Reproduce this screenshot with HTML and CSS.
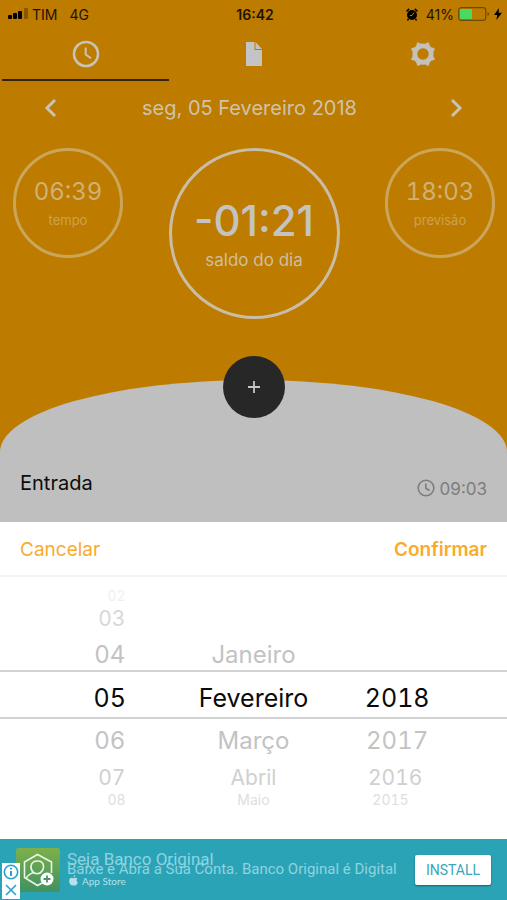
FILE: index.html
```html
<!DOCTYPE html>
<html lang="pt-BR">
<head>
<meta charset="utf-8">
<meta name="viewport" content="width=device-width, initial-scale=1">
<title>Saldo do dia</title>
<link rel="stylesheet" href="styles.css">
</head>
<body>
<div class="app">
  <header class="status">
    <div class="status-left">
      <svg class="signal" width="20" height="12" viewBox="0 0 20 12"><rect x="0" y="7" width="4" height="4" rx="1"/><rect x="5" y="5" width="4" height="6" rx="1"/><rect x="10" y="3" width="4" height="8" rx="1"/><rect x="16" y="0" width="4" height="11" rx="1" opacity=".28"/></svg>
      <span>TIM</span><span class="network">4G</span>
    </div>
    <strong>16:42</strong>
    <div class="status-right">
      <svg width="12" height="13" viewBox="0 0 12 13"><circle cx="6" cy="7" r="5"/><path d="M.6 3.4 3.2.9M11.4 3.4 8.800.9M2.500 11 1.400 12.400M9.500 11l1.100 1.400" stroke="#0d0a04" stroke-width="1.600"/><path d="M8 4.500 6 7.500H3.800" fill="none" stroke="#bd7b00" stroke-width="1"/></svg>
      <span>41%</span>
      <svg width="32" height="14" viewBox="0 0 32 14"><rect x=".7" y=".7" width="27" height="12.600" rx="2.500" fill="none" stroke="#6e4a08" stroke-width="1.200"/><rect x="2" y="2" width="12" height="10" rx="1" fill="#4bd964"/><path d="M29.500 5v4q1.600-.5 1.600-2t-1.600-2" fill="#6e4a08"/></svg>
      <svg width="8" height="12" viewBox="0 0 8 12"><path d="M5 0 0 7h3.200L2.400 12 8 4.800H4.600z"/></svg>
    </div>
  </header>

  <nav class="tabs">
    <button class="tab active" aria-label="Ponto"><svg width="28" height="28" viewBox="0 0 28 28"><circle cx="14" cy="14" r="12" fill="none" stroke="#c8c3b9" stroke-width="2.600"/><path d="M13.700 7.500v7l5.300 3.800" fill="none" stroke="#c8c3b9" stroke-width="2"/></svg></button>
    <button class="tab" aria-label="Relatório"><svg width="18" height="26" viewBox="0 0 18 26"><path d="M1 1h8.500v8H17v16H1z" fill="#c4c4c6"/><path d="M10.500 1 17 8h-6.500z" fill="#c8c3b9"/></svg></button>
    <button class="tab" aria-label="Configurações"><svg width="26" height="26" viewBox="-13 -13 26 26"><path d="M-5.500-11.600-2-10l2-.2 2 .2 3.500-1.600L6.600-8 8-6.600l3.700 1.300L10.100-2l.2 2-.2 2 1.600 3.400L8 6.700 6.700 8l-1.300 3.800L2 10.200l-2 .2-2-.2-3.400 1.600L-6.700 8-8 6.700l-3.700-1.300L-10.100 2l-.2-2 .2-2-1.600-3.400L-8-6.600-6.600-8zM0-6A6 6 0 1 0 0 6 6 6 0 1 0 0-6z" fill="#c4c1bc" stroke="#c4c1bc" stroke-width=".5" fill-rule="evenodd"/></svg></button>
  </nav>

  <div class="datebar">
    <button aria-label="Dia anterior"><svg width="14" height="20" viewBox="0 0 14 20"><path d="M11 2 3 10l8 8"/></svg></button>
    <h1>seg, 05 Fevereiro 2018</h1>
    <button aria-label="Próximo dia"><svg width="14" height="20" viewBox="0 0 14 20"><path d="m3 2 8 8-8 8"/></svg></button>
  </div>

  <section class="gauges">
    <div class="gauge"><b>06:39</b><span>tempo</span></div>
    <div class="gauge main"><b>-01:21</b><span>saldo do dia</span></div>
    <div class="gauge"><b>18:03</b><span>previsão</span></div>
  </section>

  <main class="hill">
    <button class="add" aria-label="Adicionar"><svg width="14" height="14" viewBox="0 0 14 14"><path d="M7 1v12M1 7h12" stroke="#c4c4c4" stroke-width="1.800"/></svg></button>
    <div class="entry">
      <span class="entry-name">Entrada</span>
      <span class="entry-time"><svg width="18" height="18" viewBox="0 0 18 18"><circle cx="9" cy="9" r="7.800"/><path d="M8.800 4.500V9.300l3.700 2.200"/></svg>09:03</span>
    </div>
  </main>

  <section class="sheet">
    <div class="sheet-actions"><button>Cancelar</button><button class="confirm">Confirmar</button></div>
    <div class="picker">
      <div class="row edge"><button>02</button></div>
      <div class="row far"><button>03</button></div>
      <div class="row near above"><button>04</button><button>Janeiro</button></div>
      <div class="row selected"><button>05</button><button>Fevereiro</button><button>2018</button></div>
      <div class="row near"><button>06</button><button>Março</button><button>2017</button></div>
      <div class="row far below"><button>07</button><button>Abril</button><button>2016</button></div>
      <div class="row edge last"><button>08</button><button>Maio</button><button>2015</button></div>
    </div>
  </section>

  <aside class="ad">
    <svg class="ad-logo" width="44" height="44" viewBox="0 0 44 44"><defs><linearGradient id="leaf" x1="0" y1="0" x2="0" y2="1"><stop offset="0" stop-color="#7db04a"/><stop offset="1" stop-color="#3f9262"/></linearGradient></defs><rect width="44" height="44" rx="3" fill="url(#leaf)"/><g fill="none" stroke="#eaf5e6" stroke-width="1.600"><path d="M27 34.500 21.500 37.500 8.500 29.500V14L21.500 6.500 35.500 14v11"/><path d="M10 30.500q2-4 7.500-6-3-3-2.500-6.500.8-5 6.500-5t6 5q.3 4-3 6.500M17.500 24.500q3.500 2.500 7.500 0"/></g><circle cx="31" cy="31" r="6.500" fill="#fff"/><path d="M31 27.500v7M27.500 31h7" stroke="#489566" stroke-width="1.800"/></svg>
    <div class="ad-text">
      <span class="ad-title">Seja Banco Original</span>
      <span class="ad-copy">Baixe e Abra a Sua Conta. Banco Original é Digital</span>
      <span class="ad-store"><svg width="9" height="11" viewBox="0 0 9 11"><path d="M6.300 0Q6.400 2 4.500 2.500 4.300.6 6.300 0zM4.600 3.200Q6.800 2 8.400 3.700 6.500 5.200 8.800 7.200 7.500 11.500 4.700 10.300 1.900 11.500.5 8-.8 3.600 2.200 2.800z" fill="currentColor"/></svg>App Store</span>
    </div>
    <button class="install">INSTALL</button>
    <div class="ad-choice">
      <button aria-label="Sobre o anúncio"><svg width="18" height="18" viewBox="0 0 18 18"><circle cx="9" cy="9" r="6.700"/><path d="M9 8v5M9 4.800v1.700" stroke-width="2"/></svg></button>
      <button aria-label="Fechar anúncio"><svg width="18" height="18" viewBox="0 0 18 18"><path d="m4 4 10 10M14 4 4 14"/></svg></button>
    </div>
  </aside>
</div>
</body>
</html>
```
FILE: styles.css
```css
* { box-sizing: border-box; }

body {
  margin: 0;
  font-family: Inter, "Liberation Sans", sans-serif;
  background: #bd7b00;
}

button {
  margin: 0;
  padding: 0;
  border: 0;
  background: none;
  font: inherit;
  color: inherit;
  cursor: pointer;
}

svg { display: block; flex: none; }

.app {
  display: flex;
  flex-direction: column;
  min-height: 100vh;
}

.status {
  display: grid;
  grid-template-columns: 1fr auto 1fr;
  align-items: center;
  height: 28px;
  padding: 0 5px 0 8px;
  font-size: 14px;
  color: #1c1403;
}

.status strong { font-weight: 600; }
.status-left, .status-right { display: flex; align-items: center; gap: 4px; }
.status-right { justify-content: flex-end; }
.status-right span { margin-left: 4px; }
.network { margin-left: 8px; }

.tabs {
  display: grid;
  grid-template-columns: repeat(3, 1fr);
  height: 53px;
}

.tab {
  display: flex;
  align-items: center;
  justify-content: center;
  border-bottom: 2px solid transparent;
}

.tab.active { border-color: #33230a; margin-left: 2px; }

.datebar {
  display: flex;
  align-items: center;
  justify-content: space-between;
  height: 53px;
  padding: 0 44px;
  color: #cdc3ae;
}

.datebar h1 { margin: 0; padding-right: 8px; font-size: 20px; font-weight: 400; }

.datebar path {
  fill: none;
  stroke: #c8c3b9;
  stroke-width: 3;
}

.gauges {
  display: flex;
  justify-content: space-between;
  align-items: flex-start;
  padding: 14px 12px 61px 13px;
}

.gauge {
  display: flex;
  flex-direction: column;
  align-items: center;
  justify-content: center;
  gap: 6px;
  width: 110px;
  height: 110px;
  border: 3px solid #cba65a;
  border-radius: 50%;
  color: #d0b174;
}

.gauge b { font-size: 24px; line-height: 28px; font-weight: 400; font-variant-numeric: tabular-nums; }
.gauge span { font-size: 13px; line-height: 16px; color: #cda14e; }

.gauge.main {
  width: 171px;
  height: 171px;
  border-color: #c9bda6;
  color: #c5c3c1;
}

.gauge.main b { font-size: 42px; line-height: 46px; font-weight: 500; font-variant-numeric: normal; }
.gauge.main span { font-size: 17px; line-height: 20px; color: #cdbf9f; }

.hill {
  position: relative;
  display: flex;
  flex-direction: column;
  justify-content: flex-end;
  height: 142px;
  background: #bfbfbf;
  border-radius: 50% 50% 0 0 / 72px 72px 0 0;
}

.add {
  position: absolute;
  top: -24px;
  left: 50%;
  display: grid;
  place-items: center;
  width: 62px;
  height: 62px;
  margin-left: -31px;
  border-radius: 50%;
  background: #272727;
}

.entry {
  display: flex;
  justify-content: space-between;
  padding: 0 20px 23px;
}

.entry-name { font-size: 20px; line-height: 32px; color: #0c0c0c; }

.entry-time {
  display: flex;
  align-items: flex-end;
  gap: 5px;
  font-size: 17px;
  line-height: 20px;
  color: #7d7d7d;
}

.entry-time svg { margin-bottom: 2px; fill: none; stroke: #7d7d7d; stroke-width: 1.600; }

.sheet {
  display: flex;
  flex: 1;
  flex-direction: column;
  background: #fff;
}

.sheet-actions {
  display: flex;
  justify-content: space-between;
  height: 55px;
  padding: 2px 20px 0;
  border-bottom: 2px solid #f3f3f3;
  font-size: 19px;
  color: #f9ab2b;
}

.confirm { font-weight: 600; }

.picker { flex: 1; padding: 11px 0 31px; font-variant-numeric: tabular-nums; }

.row {
  display: grid;
  grid-template-columns: repeat(3, 1fr);
  padding: 0 38px;
}

.row.near { height: 41px; padding-top: 2px; font-size: 24px; color: #c3c3c3; }
.row.near.above { height: 38px; padding-top: 6px; }

.row.selected {
  height: 49px;
  padding-top: 6px;
  border: solid #d2d2d2;
  border-width: 2px 0;
  font-size: 25px;
  color: #0a0a0a;
}

.row.far { height: 28px; padding: 0 41px; font-size: 21px; color: #d8d8d8; }
.row.far.below { height: 32px; padding-top: 2px; color: #d0d0d0; }
.row.edge { height: 16px; padding: 0 48px; font-size: 14px; line-height: 14px; color: #efefef; }
.row.edge.last { color: #dedede; }

.ad {
  position: relative;
  display: flex;
  align-items: center;
  height: 61px;
  padding: 0 16px;
  background: #2ba3b6;
  font-family: Roboto, sans-serif;
  color: #8fd3e0;
}

.ad-text {
  display: flex;
  flex: 1;
  flex-direction: column;
  padding: 2px 0 0 7px;
  white-space: nowrap;
}

.ad-title { font-size: 17px; line-height: 10px; }
.ad-copy { font-size: 15px; line-height: 10px; }

.ad-store {
  display: flex;
  align-items: center;
  gap: 4px;
  padding: 0 2px;
  font-family: Lato, sans-serif;
  font-size: 10px;
  line-height: 14px;
  color: #b5e1ea;
}

.install {
  width: 76px;
  height: 30px;
  border-radius: 2px;
  background: #fff;
  box-shadow: 0 1px 2px #17606c;
  font-size: 14px;
  color: #3aa6b7;
}

.ad-choice {
  position: absolute;
  left: 2px;
  bottom: 1px;
  display: flex;
  flex-direction: column;
  background: #fff;
}

.ad-choice svg { fill: none; stroke: #24a3cf; stroke-width: 1.600; }
```
